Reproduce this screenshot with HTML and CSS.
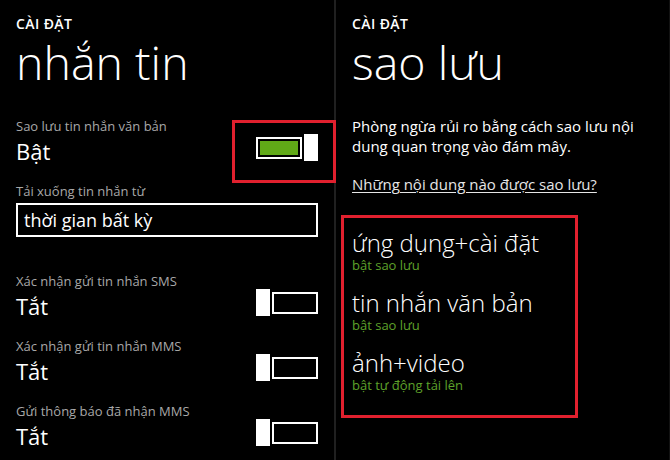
FILE: index.html
```html
<!DOCTYPE html>
<html lang="vi">
<head>
<meta charset="utf-8">
<title>Cài đặt</title>
<link rel="stylesheet" href="styles.css">
</head>
<body>
<div class="screen">
  <section class="panel panel-left">
    <div class="eyebrow">CÀI ĐẶT</div>
    <h1 class="title">nhắn tin</h1>
    <div class="settings">
      <div class="setting">
        <div class="setting-text">
          <div class="label">Sao lưu tin nhắn văn bản</div>
          <div class="value">Bật</div>
        </div>
        <div class="toggle on marked">
          <span class="track"><span class="fill"></span></span>
          <span class="thumb"></span>
        </div>
      </div>
      <div class="field">
        <div class="label">Tải xuống tin nhắn từ</div>
        <div class="textbox">thời gian bất kỳ</div>
      </div>
      <div class="setting first-off">
        <div class="setting-text">
          <div class="label">Xác nhận gửi tin nhắn SMS</div>
          <div class="value">Tắt</div>
        </div>
        <div class="toggle off">
          <span class="thumb"></span>
          <span class="track"></span>
        </div>
      </div>
      <div class="setting">
        <div class="setting-text">
          <div class="label">Xác nhận gửi tin nhắn MMS</div>
          <div class="value">Tắt</div>
        </div>
        <div class="toggle off">
          <span class="thumb"></span>
          <span class="track"></span>
        </div>
      </div>
      <div class="setting">
        <div class="setting-text">
          <div class="label">Gửi thông báo đã nhận MMS</div>
          <div class="value">Tắt</div>
        </div>
        <div class="toggle off">
          <span class="thumb"></span>
          <span class="track"></span>
        </div>
      </div>
    </div>
  </section>
  <section class="panel panel-right">
    <div class="eyebrow">CÀI ĐẶT</div>
    <h1 class="title">sao lưu</h1>
    <p class="desc">Phòng ngừa rủi ro bằng cách sao lưu nội dung quan trọng vào đám mây.</p>
    <a class="link" href="#">Những nội dung nào được sao lưu?</a>
    <ul class="backup-list">
      <li class="backup-item">
        <div class="item-title">ứng dụng+cài đặt</div>
        <div class="item-sub">bật sao lưu</div>
      </li>
      <li class="backup-item">
        <div class="item-title">tin nhắn văn bản</div>
        <div class="item-sub">bật sao lưu</div>
      </li>
      <li class="backup-item">
        <div class="item-title">ảnh+video</div>
        <div class="item-sub">bật tự động tải lên</div>
      </li>
    </ul>
  </section>
</div>
</body>
</html>
```

FILE: styles.css
```css
* { box-sizing: border-box; }
html, body {
  margin: 0;
  padding: 0;
  background: #000;
}
body {
  font-family: "Open Sans", "Noto Sans", sans-serif;
  color: #fff;
  width: 670px;
  height: 460px;
  overflow: hidden;
}
.screen {
  display: flex;
  height: 460px;
}
.panel {
  padding-top: 16px;
  padding-left: 16px;
}
.panel-left {
  width: 334px;
  flex: none;
}
.panel-right {
  flex: 1;
  border-left: 2px solid #202020;
  border-right: 1px solid #121212;
}
.eyebrow {
  font-size: 14px;
  line-height: 16px;
  font-weight: 600;
  letter-spacing: 0.4px;
}
.title {
  margin: 5px 0 0;
  font-size: 46.5px;
  line-height: 50px;
  font-weight: 300;
}
.settings {
  margin-top: 31px;
  width: 302px;
}
.setting {
  display: flex;
  justify-content: space-between;
  align-items: flex-end;
  margin-bottom: 15px;
}
.label {
  font-size: 13px;
  line-height: 16px;
  color: #a8a8a8;
}
.value {
  font-size: 22px;
  line-height: 34px;
  color: #fff;
}
.field {
  margin-top: 5px;
}
.textbox {
  margin-top: 4px;
  height: 34px;
  border: 2px solid #fff;
  padding-left: 6px;
  font-size: 18px;
  line-height: 30px;
}
.first-off {
  margin-top: 36px;
}
.toggle {
  position: relative;
  display: flex;
  align-items: center;
  gap: 2px;
  width: 62px;
  height: 27px;
  margin-bottom: 7px;
}
.thumb {
  width: 14px;
  height: 27px;
  background: #fff;
  flex: none;
}
.track {
  width: 46px;
  height: 22px;
  border: 2px solid #fff;
  padding: 2px;
  flex: none;
  margin-top: 1px;
}
.fill {
  display: block;
  width: 100%;
  height: 100%;
  background: #60a917;
}
.marked::after {
  content: "";
  position: absolute;
  left: -24px;
  top: -14px;
  width: 98px;
  height: 57px;
  border: 3px solid #e0202e;
}
.desc {
  margin: 29px 0 0;
  max-width: 300px;
  font-size: 15px;
  line-height: 20px;
}
.link {
  display: block;
  margin-top: 18px;
  font-size: 15px;
  line-height: 20px;
  color: #e6e6e6;
  text-decoration: underline;
  text-underline-offset: 2px;
}
.backup-list {
  position: relative;
  list-style: none;
  margin: 35px 0 0;
  padding: 0;
  width: 210px;
}
.backup-list::after {
  content: "";
  position: absolute;
  left: -11px;
  top: -14px;
  width: 231px;
  height: 197px;
  border: 3px solid #e0202e;
}
.backup-item {
  margin-bottom: 16px;
}
.item-title {
  font-size: 24px;
  line-height: 28px;
  font-weight: 300;
}
.item-sub {
  font-size: 13px;
  line-height: 16px;
  color: #5ea22a;
}
```
